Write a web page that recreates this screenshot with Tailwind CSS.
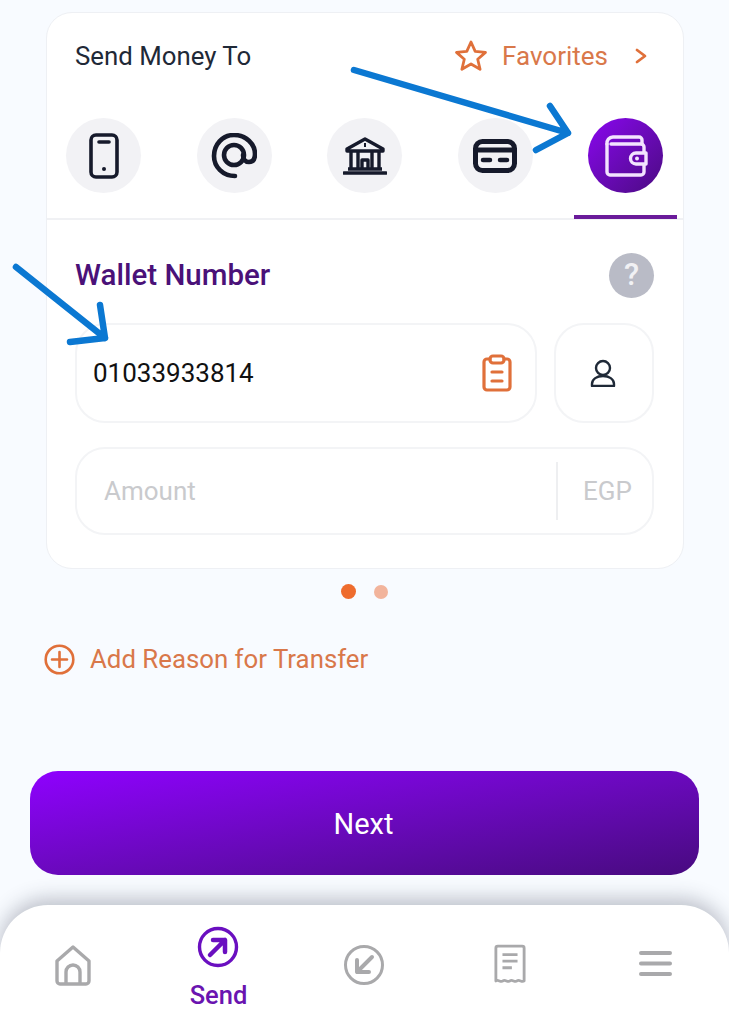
<!DOCTYPE html>
<html lang="en">
<head>
  <meta charset="UTF-8"/>
  <title>Send Money</title>
  <script src="https://cdn.jsdelivr.net/npm/@tailwindcss/browser@4"></script>
</head>
<body class="bg-[#f8fbff] font-[Roboto,sans-serif]">
<div class="relative w-[729px] h-[1024px] overflow-hidden flex flex-col">

  <!-- Card -->
  <section class="mt-3 ml-[46px] w-[638px] h-[557px] bg-white border border-[#eef0f4] rounded-[26px] flex flex-col">
    <div class="h-[88px] pl-7 pr-[36px] pt-[25px] flex justify-between items-start">
      <h2 class="text-[25.800px] leading-9 text-[#1f2937]">Send Money To</h2>
      <div class="flex items-center text-[#d9784a]">
        <svg class="w-[34px] h-[34px] mr-[14px]" viewBox="0 0 34 34" fill="none" stroke="#e0703a" stroke-width="2.800" stroke-linejoin="round"><path d="M17 3l4.200 9.400 10.300 1-7.800 6.800 2.400 10.100L17 25l-9.100 5.300 2.400-10.100-7.800-6.800 10.300-1z"/></svg>
        <span class="text-[26px] leading-9">Favorites</span>
        <svg class="w-3 h-[18px] ml-[27px]" viewBox="0 0 12 18" fill="none" stroke="#e0703a" stroke-width="2.800" stroke-linecap="round" stroke-linejoin="round"><path d="M2 3l8 6-8 6"/></svg>
      </div>
    </div>

    <!-- Method tabs -->
    <div class="relative h-[119px] pl-[19px] pr-[20px] pt-[17px] border-b-2 border-[#f0f1f4] flex justify-between items-start">
      <div class="w-[75px] h-[75px] rounded-full bg-[#f2f2f5] flex items-center justify-center">
        <svg class="w-[30px] h-[46px]" viewBox="0 0 30 46" fill="none" stroke="#161a2b" stroke-width="3.600"><rect x="2" y="2" width="26" height="42" rx="5"/><path d="M10 9h10" stroke-linecap="round"/><circle cx="15" cy="36" r="2" fill="#161a2b" stroke="none"/></svg>
      </div>
      <div class="w-[75px] h-[75px] rounded-full bg-[#f2f2f5] flex items-center justify-center">
        <svg class="w-[46px] h-[46px]" viewBox="0 0 46 46" fill="none" stroke="#161a2b" stroke-width="4.600" stroke-linecap="round"><path d="M24 43C12 43 3 34 3 23S11 2 23 2s21 9 21 19c0 5-2 8-6 8s-6-3-6-7"/><circle cx="23" cy="22" r="10"/></svg>
      </div>
      <div class="w-[75px] h-[75px] rounded-full bg-[#f2f2f5] flex items-center justify-center">
        <svg class="w-[44px] h-[38px]" viewBox="0 0 44 38" fill="none" stroke="#161a2b" stroke-width="3.400" stroke-linejoin="round"><path d="M22 2L4 12v2h36v-2z"/><path d="M22 6v4" stroke-width="2"/><path d="M8 15v17M15 15v17M29 15v17M36 15v17M19 32V23h6v9M5 32h34"/><path d="M1 36h42" stroke-linecap="round"/></svg>
      </div>
      <div class="w-[75px] h-[75px] rounded-full bg-[#f2f2f5] flex items-center justify-center">
        <svg class="w-[44px] h-[34px]" viewBox="0 0 44 34" fill="none" stroke="#161a2b"><rect x="2.500" y="2.500" width="39" height="29" rx="7" stroke-width="5"/><path d="M2 11h40" stroke-width="5"/><path d="M10 21h7M27 21h7" stroke-width="4.500" stroke-linecap="round"/></svg>
      </div>
      <div class="w-[75px] h-[75px] rounded-full bg-linear-to-br from-[#8a05f0] to-[#4b0a82] flex items-center justify-center">
        <svg class="w-[44px] h-[44px]" viewBox="0 0 44 44" fill="none" stroke="#f3e3ff" stroke-width="3.400" stroke-linecap="round" stroke-linejoin="round"><path d="M3 10a6 6 0 0 1 6-7h26a3 3 0 0 1 3 3v4"/><path d="M3 10v28a3 3 0 0 0 3 3h31a3 3 0 0 0 3-3v-8"/><path d="M7 10h30a3 3 0 0 1 3 3v7"/><path d="M42 19H32a5.500 5.500 0 0 0 0 11h10z" fill="#6a08b0"/><circle cx="33" cy="24.500" r="2" fill="#f3e3ff" stroke="none"/></svg>
      </div>
      <div class="absolute left-[527px] bottom-[-1px] w-[103px] h-[4px] bg-[#6a1b9a]"></div>
    </div>

    <!-- Form -->
    <div class="flex-1 pl-[28px] pr-[29px]">
      <div class="h-[103px] pt-[33px] flex justify-between items-start">
        <h3 class="text-[29.500px] leading-[44px] font-medium text-[#4a1178]">Wallet Number</h3>
        <div class="w-[45px] h-[45px] rounded-full bg-[#b9bbc6] flex items-center justify-center text-[#f1f1f4] text-[31px] font-medium">?</div>
      </div>
      <div class="flex gap-[17px]">
        <div class="w-[462px] h-[100px] border-2 border-[#f3f4f6] rounded-[30px] pl-[16px] pr-[22px] flex items-center justify-between">
          <span class="text-[26px] text-[#111]">01033933814</span>
          <svg class="w-[32px] h-[38px]" viewBox="0 0 32 38" fill="none" stroke="#e0703a" stroke-width="3.200" stroke-linecap="round"><path d="M9 5H6a3 3 0 0 0-3 3v25a3 3 0 0 0 3 3h20a3 3 0 0 0 3-3V8a3 3 0 0 0-3-3h-3"/><rect x="9" y="2" width="14" height="7" rx="3"/><path d="M11 18h10M11 27h10"/></svg>
        </div>
        <div class="w-[100px] h-[100px] border-2 border-[#f3f4f6] rounded-[30px] flex items-center justify-center">
          <svg class="w-[26px] h-[28px] -translate-x-px" viewBox="0 0 26 28" fill="none" stroke="#1f2937" stroke-width="2.400"><circle cx="13" cy="9" r="7"/><path d="M2 27v-2c0-5 5-8 11-8s11 3 11 8v2z" stroke-linejoin="round"/></svg>
        </div>
      </div>
      <div class="mt-[24px] h-[88px] border-2 border-[#f3f4f6] rounded-[30px] pl-[27px] flex items-center">
        <span class="w-[452px] text-[26px] text-[#c9cacd]">Amount</span>
        <div class="w-[2px] h-[58px] bg-[#eeeff1]"></div>
        <span class="ml-[25px] text-[26px] text-[#c9cacd]">EGP</span>
      </div>
    </div>
  </section>

  <!-- Pager -->
  <div class="mt-[15px] ml-[341px] h-[15px] flex items-center">
    <span class="w-[15px] h-[15px] rounded-full bg-[#ee6c2e]"></span>
    <span class="ml-[18px] w-[14px] h-[14px] rounded-full bg-[#f2b49c]"></span>
  </div>

  <!-- Reason -->
  <div class="mt-[44px] ml-[44px] h-[32px] flex items-center gap-[15px] text-[#d9784a]">
    <svg class="w-[31px] h-[31px]" viewBox="0 0 31 31" fill="none" stroke="#e0703a" stroke-width="2.600" stroke-linecap="round"><circle cx="15.500" cy="15.500" r="13.800"/><path d="M15.500 8v15M8 15.500h15"/></svg>
    <span class="text-[25.800px]">Add Reason for Transfer</span>
  </div>

  <!-- Next -->
  <button class="mt-[96px] ml-[30px] w-[669px] h-[104px] pt-[3px] pr-[2px] rounded-[28px] bg-linear-to-br from-[#8f00ff] to-[#480a80] text-white text-[29px]">Next</button>

  <!-- Bottom nav -->
  <nav class="absolute left-0 right-0 bottom-0 h-[119px] bg-white rounded-t-[48px] shadow-[0_-6px_20px_rgba(60,65,85,0.32)] grid grid-cols-[146px_145px_146px_145px_147px]">
    <div class="flex justify-center pt-[39px]">
      <svg class="w-[38px] h-[42px]" viewBox="0 0 38 42" fill="none" stroke="#a9a9ab" stroke-width="3.400" stroke-linejoin="round"><path d="M3 17L19 3l16 14v20a3 3 0 0 1-3 3H6a3 3 0 0 1-3-3z"/><path d="M12 39V28a7 7 0 0 1 14 0v11"/></svg>
    </div>
    <div class="flex flex-col items-center pt-[21px]">
      <svg class="w-[42px] h-[42px] -translate-x-px" viewBox="0 0 42 42" fill="none" stroke="#6a0fc0" stroke-linecap="round" stroke-linejoin="round"><circle cx="21" cy="21" r="18.500" stroke-width="3.400"/><path d="M13 29l15-15M16 14h12v12" stroke-width="4.500"/></svg>
      <span class="mt-[11px] text-[25.500px] leading-[32px] font-medium text-[#6a14b0]">Send</span>
    </div>
    <div class="flex justify-center pt-[39px]">
      <svg class="w-[42px] h-[42px]" viewBox="0 0 42 42" fill="none" stroke="#a9a9ab" stroke-linecap="round" stroke-linejoin="round"><circle cx="21" cy="21" r="18.500" stroke-width="3"/><path d="M29 13L14 28M26 28H14V16" stroke-width="4"/></svg>
    </div>
    <div class="flex justify-center pt-[39px]">
      <svg class="w-[32px] h-[40px]" viewBox="0 0 34 42" fill="none" stroke="#a9a9ab" stroke-width="3"><path d="M2 39V4a2 2 0 0 1 2-2h26a2 2 0 0 1 2 2v35c-2.500 2-5-2-7.500 0s-5-2-7.500 0-5-2-7.500 0-5-2-7.500 0z" stroke-linejoin="round"/><path d="M9 11h16M9 18h16M9 25h10"/></svg>
    </div>
    <div class="flex justify-center pt-[45px]">
      <svg class="w-[33px] h-[27px]" viewBox="0 0 33 27" fill="none" stroke="#a9a9ab" stroke-width="4" stroke-linecap="round"><path d="M2 3h29M2 13.500h29M2 24h29"/></svg>
    </div>
  </nav>

  <!-- Annotation arrows drawn over the screenshot -->
  <svg class="absolute inset-0 w-[729px] h-[1024px] pointer-events-none" viewBox="0 0 729 1024" fill="none" stroke="#0b78d2" stroke-width="6.500" stroke-linecap="round" stroke-linejoin="round">
    <path d="M354 70L568 133M550 106L568 133L536 150"/>
    <path d="M16 267L105 338M100 305L105 338L70 342"/>
  </svg>
</div>
</body>
</html>
